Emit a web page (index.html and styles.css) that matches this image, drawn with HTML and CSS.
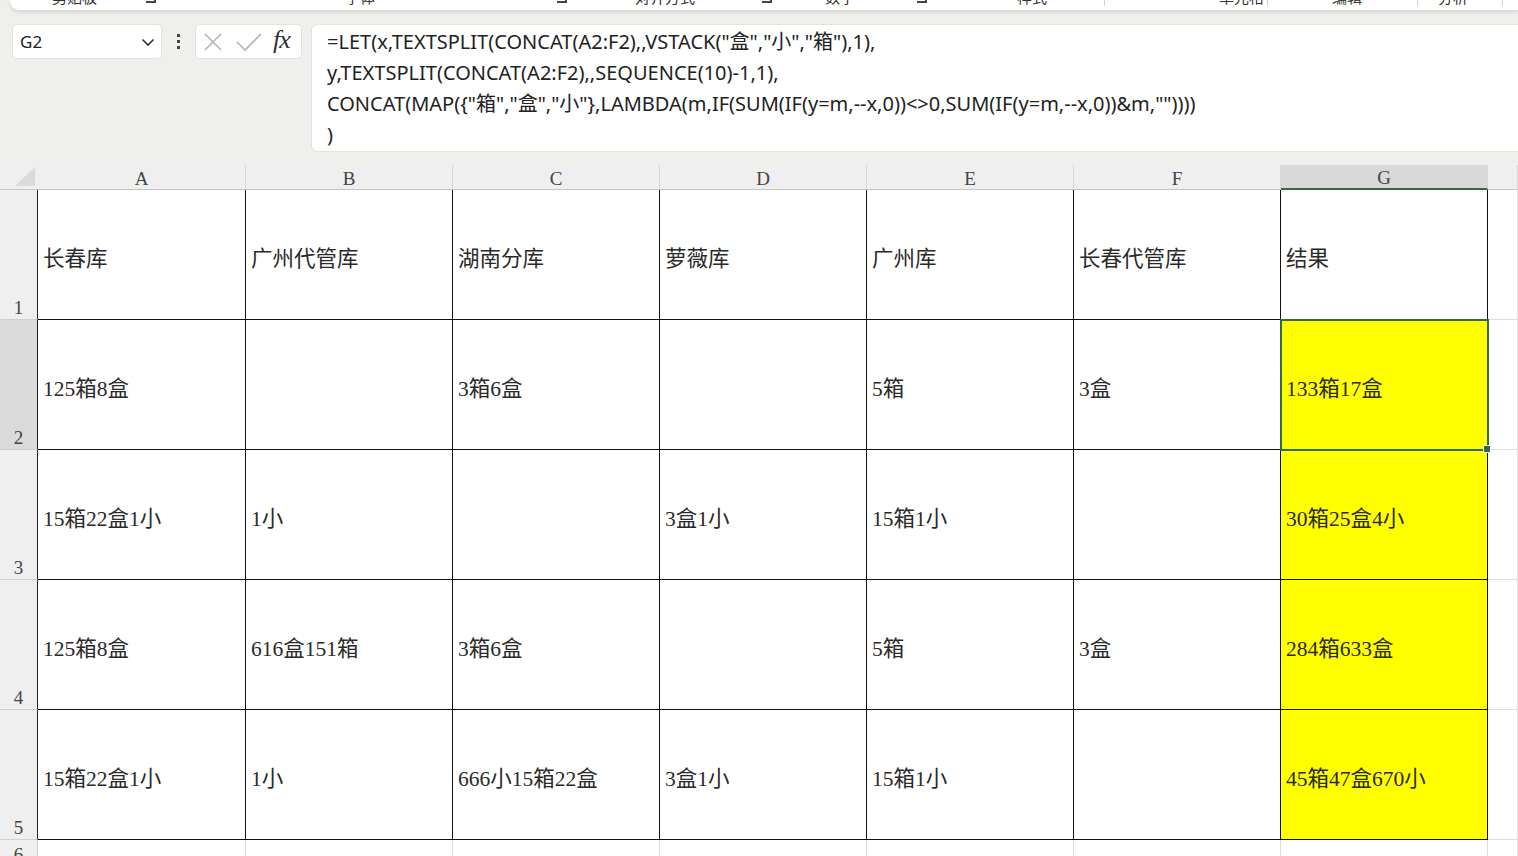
FILE: index.html
```html
<!DOCTYPE html>
<html lang="zh-CN">
<head>
<meta charset="utf-8">
<title>Sheet</title>
<link rel="stylesheet" href="styles.css">
</head>
<body>
<div class="ribbon">
  <div class="ribbon-row">
    <div class="grp g1"><span class="lbl">剪贴板</span><span class="launch"></span></div>
    <div class="grp g2"><span class="lbl">字体</span><span class="launch"></span></div>
    <div class="grp g3"><span class="lbl">对齐方式</span><span class="launch"></span></div>
    <div class="grp g4"><span class="lbl">数字</span><span class="launch"></span></div>
    <div class="grp g5"><span class="lbl">样式</span><span class="sep"></span></div>
    <div class="grp g6"><span class="lbl">单元格</span><span class="sep"></span></div>
    <div class="grp g7"><span class="lbl">编辑</span><span class="sep"></span></div>
    <div class="grp g8"><span class="lbl">分析</span><span class="sep"></span></div>
  </div>
</div>

<div class="fbar">
  <div class="namebox">
    <span class="ref">G2</span>
    <svg class="chev" width="14" height="10" viewBox="0 0 14 10"><polyline points="1.5,2.5 7,8 12.5,2.5" fill="none" stroke="#333" stroke-width="1.6"/></svg>
  </div>
  <div class="dots"><i></i><i></i><i></i></div>
  <div class="fxbox">
    <svg width="20" height="20" viewBox="0 0 20 20"><path d="M2 2 L18 18 M18 2 L2 18" stroke="#b4b4b4" stroke-width="1.6" fill="none"/></svg>
    <svg width="26" height="20" viewBox="0 0 26 20"><path d="M1 10 L9 18 L25 2" stroke="#b4b4b4" stroke-width="1.6" fill="none"/></svg>
    <span class="fx">fx</span>
  </div>
  <div class="formula">
    <div>=LET(x,TEXTSPLIT(CONCAT(A2:F2),,VSTACK("盒","小","箱"),1),</div>
    <div>y,TEXTSPLIT(CONCAT(A2:F2),,SEQUENCE(10)-1,1),</div>
    <div>CONCAT(MAP({"箱","盒","小"},LAMBDA(m,IF(SUM(IF(y=m,--x,0))&lt;&gt;0,SUM(IF(y=m,--x,0))&amp;m,""))))</div>
    <div>)</div>
  </div>
</div>

<div class="sheet">
  <div class="corner"><span class="tri"></span></div>
  <div class="ch">A</div><div class="ch">B</div><div class="ch">C</div><div class="ch">D</div><div class="ch">E</div><div class="ch">F</div><div class="ch chsel">G</div><div class="ch"></div>

  <div class="rh">1</div>
  <div class="c b">长春库</div><div class="c b">广州代管库</div><div class="c b">湖南分库</div><div class="c b">萝薇库</div><div class="c b">广州库</div><div class="c b">长春代管库</div><div class="c b">结果</div><div class="c"></div>

  <div class="rh rhsel">2</div>
  <div class="c b">125箱8盒</div><div class="c b"></div><div class="c b">3箱6盒</div><div class="c b"></div><div class="c b">5箱</div><div class="c b">3盒</div><div class="c b y sel">133箱17盒</div><div class="c"></div>

  <div class="rh">3</div>
  <div class="c b">15箱22盒1小</div><div class="c b">1小</div><div class="c b"></div><div class="c b">3盒1小</div><div class="c b">15箱1小</div><div class="c b"></div><div class="c b y">30箱25盒4小</div><div class="c"></div>

  <div class="rh">4</div>
  <div class="c b">125箱8盒</div><div class="c b">616盒151箱</div><div class="c b">3箱6盒</div><div class="c b"></div><div class="c b">5箱</div><div class="c b">3盒</div><div class="c b y">284箱633盒</div><div class="c"></div>

  <div class="rh">5</div>
  <div class="c b">15箱22盒1小</div><div class="c b">1小</div><div class="c b">666小15箱22盒</div><div class="c b">3盒1小</div><div class="c b">15箱1小</div><div class="c b"></div><div class="c b y">45箱47盒670小</div><div class="c"></div>

  <div class="rh rh6">6</div>
  <div class="c"></div><div class="c"></div><div class="c"></div><div class="c"></div><div class="c"></div><div class="c"></div><div class="c"></div><div class="c"></div>
</div>
</body>
</html>
```
FILE: styles.css
```css
html, body {
  margin: 0;
  padding: 0;
}
body {
  width: 1518px;
  height: 856px;
  overflow: hidden;
  background: #efefec;
  font-family: "Noto Sans", "Noto Sans CJK SC", sans-serif;
  color: #222;
}

/* ribbon bottom strip */
.ribbon {
  margin-left: 10px;
  height: 10px;
  background: #fff;
  border-bottom-left-radius: 9px;
  box-shadow: 0 2px 4px rgba(0,0,0,0.12);
  overflow: hidden;
  position: relative;
}
.ribbon-row {
  display: flex;
  height: 20px;
  margin-top: -14px;
  align-items: center;
  font-family: "Noto Sans CJK SC", sans-serif;
  font-size: 15px;
  color: #333;
}
.grp {
  display: flex;
  align-items: center;
  height: 20px;
  box-sizing: border-box;
  justify-content: space-between;
}
.launch {
  width: 8px;
  height: 8px;
  border-right: 2px solid #444;
  border-bottom: 2px solid #444;
  margin-top: 4px;
}
.sep {
  width: 1px;
  height: 20px;
  background: #d0d0d0;
}
.g1 { width: 150px; padding-left: 42px; padding-right: 4px; }
.g2 { width: 412px; padding-left: 185px; padding-right: 5px; }
.g3 { width: 205px; padding-left: 63px; padding-right: 5px; }
.g4 { width: 155px; padding-left: 48px; padding-right: 5px; }
.g5 { width: 173px; padding-left: 85px; }
.g6 { width: 163px; padding-left: 114px; }
.g7 { width: 150px; padding-left: 64px; }
.g8 { width: 85px; padding-left: 20px; }

/* formula bar */
.fbar {
  display: flex;
  align-items: flex-start;
  margin-top: 14px;
  padding-left: 12px;
  height: 128px;
}
.namebox {
  width: 150px;
  height: 35px;
  box-sizing: border-box;
  background: #fff;
  border: 1px solid #e2e2e2;
  border-radius: 5px;
  display: flex;
  align-items: center;
  justify-content: space-between;
  padding: 0 6px 0 7px;
}
.ref {
  font-family: "Noto Sans", sans-serif;
  font-size: 17px;
  color: #222;
}
.dots {
  width: 33px;
  height: 35px;
  display: flex;
  flex-direction: column;
  align-items: center;
  justify-content: center;
  gap: 3px;
}
.dots i {
  display: block;
  width: 3px;
  height: 3px;
  background: #444;
}
.fxbox {
  width: 107px;
  height: 35px;
  box-sizing: border-box;
  background: #fff;
  border: 1px solid #e2e2e2;
  border-radius: 5px;
  display: flex;
  align-items: center;
  padding-left: 7px;
  gap: 13px;
}
.fx {
  font-family: "Liberation Serif", serif;
  font-style: italic;
  font-size: 26px;
  color: #333;
  margin-left: -2px;
  margin-top: -4px;
  letter-spacing: -1px;
}
.formula {
  margin-left: 9px;
  flex: 1;
  height: 128px;
  box-sizing: border-box;
  background: #fff;
  border: 1px solid #e2e2e2;
  border-right: none;
  border-radius: 6px 0 0 6px;
  padding: 1px 0 0 15px;
  font-family: "Noto Sans", "Noto Sans CJK SC", sans-serif;
  font-size: 20px;
  line-height: 31px;
  color: #222;
  white-space: nowrap;
}

/* sheet */
.sheet {
  margin-top: 13px;
  display: grid;
  grid-template-columns: 38px 208px repeat(6, 207px) 1fr;
  grid-template-rows: 25px repeat(5, 130px) 30px;
}
.corner {
  background: #efefef;
  border-bottom: 1px solid #c9c9c9;
  position: relative;
}
.tri {
  position: absolute;
  right: 3px;
  bottom: 3px;
  width: 0;
  height: 0;
  border-left: 20px solid transparent;
  border-bottom: 19px solid #dadada;
}
.ch {
  background: #efefef;
  border-right: 1px solid #d6d6d6;
  border-bottom: 1px solid #c4c4c4;
  display: flex;
  align-items: center;
  justify-content: center;
  font-family: "Liberation Serif", serif;
  font-size: 19px;
  color: #444;
  padding-top: 3px;
}
.chsel {
  background: #d9d9d9;
  border-bottom: 2px solid #2f6b3f;
}
.rh {
  background: #efefef;
  border-right: 1px solid #222;
  border-bottom: 1px solid #d0d0d0;
  display: flex;
  align-items: flex-end;
  justify-content: center;
  font-family: "Liberation Serif", serif;
  font-size: 19px;
  color: #444;
  padding-bottom: 0;
  box-sizing: border-box;
}
.rhsel {
  background: #dadada;
}
.rh6 {
  border-right: 1px solid #d0d0d0;
  align-items: flex-start;
  padding-top: 4px;
}
.c {
  background: #fff;
  border-right: 1px solid #dedede;
  border-bottom: 1px solid #dedede;
  display: flex;
  align-items: center;
  padding: 3px 0 0 5px;
  box-sizing: border-box;
  font-family: "Liberation Serif", "Noto Sans CJK SC", serif;
  font-size: 21.5px;
  color: #2a2a2a;
  white-space: nowrap;
  overflow: hidden;
}
.b {
  border-right: 1px solid #111;
  border-bottom: 1px solid #111;
  box-shadow: 1px 1px 0 #d2d2d2;
}
.y {
  background: #ffff00;
}
.sel {
  position: relative;
  overflow: visible;
  outline: 2px solid #2f6b3f;
  outline-offset: -1px;
  z-index: 2;
}
.sel::after {
  content: "";
  position: absolute;
  right: -4px;
  bottom: -4px;
  width: 6px;
  height: 6px;
  background: #2f6b3f;
  border: 1px solid #fff;
}
```
